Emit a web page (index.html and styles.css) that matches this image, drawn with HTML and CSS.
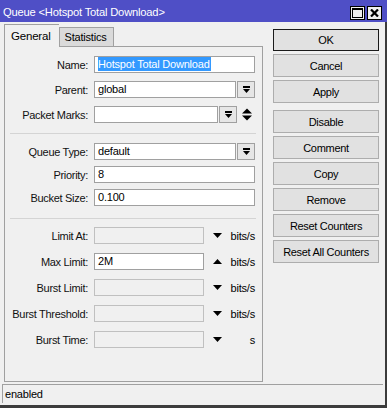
FILE: index.html
```html
<!DOCTYPE html>
<html lang="en">
<head>
    <meta charset="UTF-8">
    <title>Queue &lt;Hotspot Total Download&gt;</title>
    <link rel="stylesheet" href="styles.css">
</head>
<body>
<div class="window">
    <div class="titlebar">
        <span class="title">Queue &lt;Hotspot Total Download&gt;</span>
        <div class="tb-buttons">
            <div class="tb-btn">
                <svg width="11" height="10" viewBox="0 0 11 10"><rect x="0.5" y="0.5" width="10" height="9" fill="none" stroke="#000"/><rect x="0" y="0" width="11" height="2" fill="#000"/></svg>
            </div>
            <div class="tb-btn">
                <svg width="9" height="8" viewBox="0 0 9 8"><path d="M1 0.5 L8 7.5 M8 0.5 L1 7.5" stroke="#000" stroke-width="2.2"/></svg>
            </div>
        </div>
    </div>

    <div class="body">
        <div class="main">
            <div class="tabs">
                <div class="tab active">General</div>
                <div class="tab">Statistics</div>
            </div>
            <div class="panel">
                <div class="section first">
                    <div class="row">
                        <label>Name:</label>
                        <div class="input full"><span class="selected">Hotspot Total Download</span></div>
                    </div>
                    <div class="row">
                        <label>Parent:</label>
                        <div class="input combo">global</div>
                        <div class="drop"><svg width="9" height="8" viewBox="0 0 9 8"><rect x="1" y="0" width="7" height="2"/><polygon points="1,3 8,3 4.5,7"/></svg></div>
                    </div>
                    <div class="row">
                        <label>Packet Marks:</label>
                        <div class="input combo short"></div>
                        <div class="drop"><svg width="9" height="8" viewBox="0 0 9 8"><rect x="1" y="0" width="7" height="2"/><polygon points="1,3 8,3 4.5,7"/></svg></div>
                        <div class="updown"><svg width="10" height="13" viewBox="0 0 10 13"><polygon points="0,5.5 10,5.5 5,0.5"/><polygon points="0,7.5 10,7.5 5,12.5"/></svg></div>
                    </div>
                </div>
                <div class="sep"></div>
                <div class="section second">
                    <div class="row">
                        <label>Queue Type:</label>
                        <div class="input combo">default</div>
                        <div class="drop"><svg width="9" height="8" viewBox="0 0 9 8"><rect x="1" y="0" width="7" height="2"/><polygon points="1,3 8,3 4.5,7"/></svg></div>
                    </div>
                    <div class="row">
                        <label>Priority:</label>
                        <div class="input full">8</div>
                    </div>
                    <div class="row">
                        <label>Bucket Size:</label>
                        <div class="input full">0.100</div>
                    </div>
                </div>
                <div class="sep lower"></div>
                <div class="section third">
                    <div class="row">
                        <label>Limit At:</label>
                        <div class="input limit off"></div>
                        <div class="arrow"><svg width="9" height="5" viewBox="0 0 9 5"><polygon points="0,0 9,0 4.5,5"/></svg></div>
                        <span class="unit">bits/s</span>
                    </div>
                    <div class="row">
                        <label>Max Limit:</label>
                        <div class="input limit">2M</div>
                        <div class="arrow"><svg width="9" height="5" viewBox="0 0 9 5"><polygon points="0,5 9,5 4.5,0"/></svg></div>
                        <span class="unit">bits/s</span>
                    </div>
                    <div class="row">
                        <label>Burst Limit:</label>
                        <div class="input limit off"></div>
                        <div class="arrow"><svg width="9" height="5" viewBox="0 0 9 5"><polygon points="0,0 9,0 4.5,5"/></svg></div>
                        <span class="unit">bits/s</span>
                    </div>
                    <div class="row">
                        <label>Burst Threshold:</label>
                        <div class="input limit off"></div>
                        <div class="arrow"><svg width="9" height="5" viewBox="0 0 9 5"><polygon points="0,0 9,0 4.5,5"/></svg></div>
                        <span class="unit">bits/s</span>
                    </div>
                    <div class="row">
                        <label>Burst Time:</label>
                        <div class="input limit off"></div>
                        <div class="arrow"><svg width="9" height="5" viewBox="0 0 9 5"><polygon points="0,0 9,0 4.5,5"/></svg></div>
                        <span class="unit">s</span>
                    </div>
                </div>
            </div>
        </div>

        <div class="actions">
            <button class="btn default">OK</button>
            <button class="btn">Cancel</button>
            <button class="btn">Apply</button>
            <button class="btn spaced">Disable</button>
            <button class="btn">Comment</button>
            <button class="btn">Copy</button>
            <button class="btn">Remove</button>
            <button class="btn">Reset Counters</button>
            <button class="btn">Reset All Counters</button>
        </div>
    </div>

    <div class="status">enabled</div>
</div>
</body>
</html>
```

FILE: styles.css
```css
body {
    margin: 0;
    font-family: "Liberation Sans", Arial, sans-serif;
    font-size: 11px;
    letter-spacing: -0.2px;
    color: #000;
}

.window {
    width: 387px;
    height: 408px;
    box-sizing: border-box;
    background: #f0f0f0;
    border-right: 2px solid #3c3c3c;
    border-bottom: 3px solid #3c3c3c;
    display: flex;
    flex-direction: column;
}

.titlebar {
    height: 22px;
    background: #4f4fc6;
    display: flex;
    align-items: center;
    padding: 0 5px 0 3px;
    margin-right: -2px;
}

.title {
    color: #fff;
    font-size: 11.2px;
    flex: 1;
    padding-top: 2px;
}

.tb-buttons {
    display: flex;
    gap: 2px;
    margin-top: 4px;
}

.tb-btn {
    width: 15px;
    height: 14px;
    box-sizing: border-box;
    border: 1px solid #000;
    background: #f0f0f0;
    display: flex;
    align-items: center;
    justify-content: center;
}

.body {
    display: flex;
    padding: 2px 0 0 4px;
}

.main {
    width: 259px;
}

.tabs {
    display: flex;
    align-items: flex-end;
    height: 22px;
}

.tab {
    height: 19px;
    box-sizing: border-box;
    padding: 3px 6px 0 5px;
    border: 1px solid #a0a0a0;
    border-bottom: none;
    background: #dadada;
}

.tab.active {
    height: 23px;
    margin-bottom: -1px;
    padding: 5px 8px 0 6px;
    background: #f0f0f0;
    border-right: none;
    position: relative;
    z-index: 1;
    font-size: 11.5px;
}

.panel {
    height: 336px;
    box-sizing: border-box;
    border: 1px solid #a0a0a0;
    padding-top: 9px;
}

.section {
    display: flex;
    flex-direction: column;
}

.section.first { gap: 8px; }
.section.second { gap: 6px; }
.section.third { gap: 9px; }

.sep {
    height: 1px;
    background: #d4d4d4;
    margin: 10px 6px 9px 5px;
}

.sep.lower {
    margin: 12px 6px 8px 5px;
}

.row {
    display: flex;
    align-items: center;
    height: 17px;
}

label {
    width: 83px;
    text-align: right;
    margin-right: 6px;
    color: #111;
    letter-spacing: -0.3px;
}

.input {
    height: 17px;
    box-sizing: border-box;
    border: 1px solid #a0a0a0;
    background: #fff;
    padding: 1px 0 0 3px;
    line-height: 13px;
    white-space: nowrap;
}

.input.full { width: 161px; }
.input.combo { width: 142px; }
.input.combo.short { width: 124px; }
.input.limit { width: 110px; }

.input.off {
    background: #f0f0f0;
    border-color: #c0c0c0;
}

.selected {
    background: #3399ff;
    color: #fff;
    padding: 1px 1px 1px 0;
}

.drop {
    width: 18px;
    height: 17px;
    box-sizing: border-box;
    margin-left: 1px;
    border: 1px solid #a0a0a0;
    background: #e6e6e6;
    display: flex;
    align-items: center;
    justify-content: center;
}

.updown {
    width: 18px;
    display: flex;
    justify-content: center;
    padding-left: 1px;
}

.arrow {
    width: 22px;
    display: flex;
    justify-content: center;
    padding-left: 2px;
}

.unit {
    width: 27px;
    text-align: right;
}

.actions {
    display: flex;
    flex-direction: column;
    gap: 3px;
    margin-left: 10px;
    padding-top: 5px;
}

.btn {
    width: 106px;
    height: 23px;
    border: 1px solid #adadad;
    background: #e1e1e1;
    font-family: inherit;
    font-size: 11px;
    letter-spacing: -0.3px;
    color: #000;
    padding: 0;
}

.btn.default {
    border-color: #1a1a1a;
    height: 22px;
}

.btn.spaced {
    margin-top: 4px;
}

.status {
    margin: 2px 2px 0 2px;
    height: 19px;
    box-sizing: border-box;
    border-top: 1px solid #a0a0a0;
    border-left: 1px solid #a0a0a0;
    padding: 3px 0 0 2px;
}
```
